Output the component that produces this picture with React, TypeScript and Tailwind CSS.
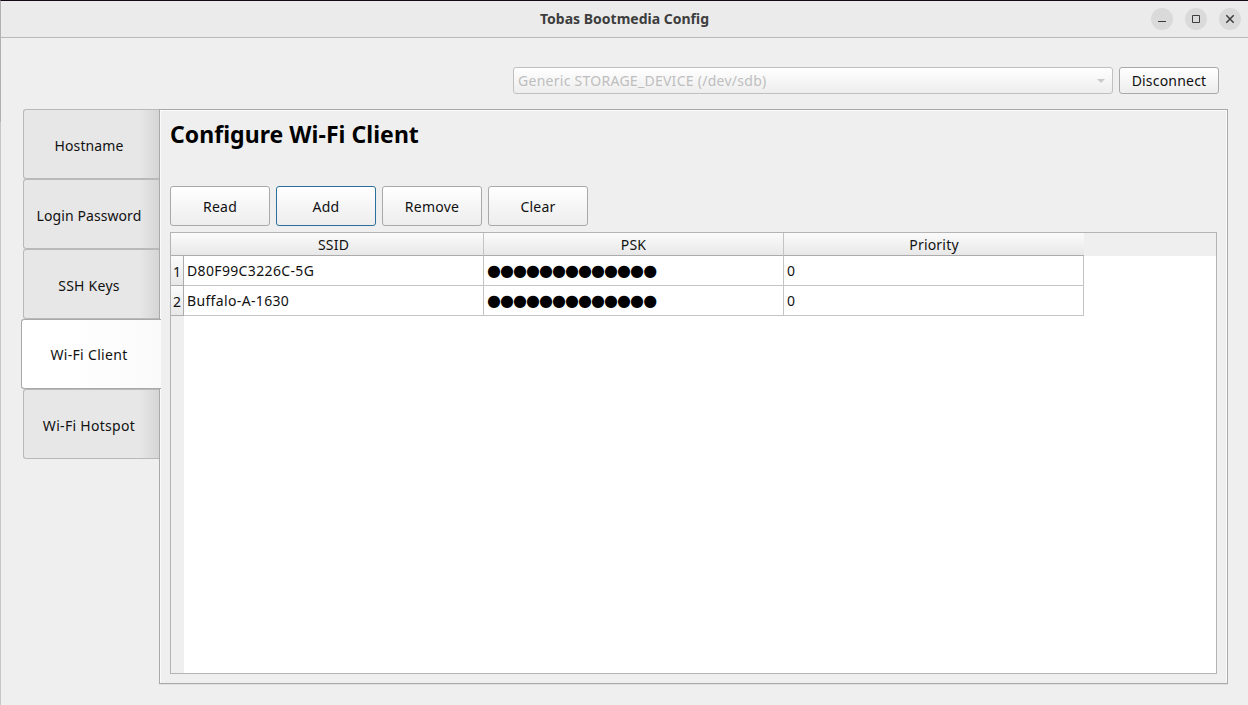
import type { ReactNode } from "react";

const SANS = "font-['Noto_Sans','Open_Sans',sans-serif]";

const tabs = [
  { label: "Hostname", spacing: "tracking-[0.12px]" },
  { label: "Login Password", spacing: "tracking-[0.08px]" },
  { label: "SSH Keys", spacing: "tracking-[0.25px]" },
  { label: "Wi-Fi Client", spacing: "tracking-[0.32px]" },
  { label: "Wi-Fi Hotspot", spacing: "tracking-[0.3px]" },
];

const actions = ["Read", "Add", "Remove", "Clear"];

const networks = [
  { ssid: "D80F99C3226C-5G", length: 13, priority: 0 },
  { ssid: "Buffalo-A-1630", length: 13, priority: 0 },
];

function WindowButton({ children }: { children: ReactNode }) {
  return (
    <button className="flex h-[22px] w-[22px] items-center justify-center rounded-full bg-[#dadada]">
      <svg width="22" height="22" viewBox="0 0 22 22" fill="none" stroke="#3d3d3d">
        {children}
      </svg>
    </button>
  );
}

function TitleBar() {
  return (
    <header className="grid h-[38px] shrink-0 grid-cols-[1fr_auto_1fr] border-t border-b border-l border-t-[#140612] border-b-[#b9b9b9] border-l-[#b0b0b0] bg-[#ebebeb]">
      <div />
      <h1 className="pt-px text-[14px] leading-[33px] font-bold text-[#3d3d3d]">Tobas Bootmedia Config</h1>
      <div className="flex items-start justify-end gap-3 pt-[7px] pr-[7px]">
        <WindowButton>
          <path d="M7 13.5h8" />
        </WindowButton>
        <WindowButton>
          <path d="M7.5 7.5h7v7h-7z" />
        </WindowButton>
        <WindowButton>
          <path d="M7.3 7.3l7.4 7.4M14.7 7.3l-7.4 7.4" strokeWidth="1.5" />
        </WindowButton>
      </div>
    </header>
  );
}

function Tab({ label, spacing, active }: { label: string; spacing: string; active: boolean }) {
  return active ? (
    <button
      className={`z-10 -mr-0.5 h-[70px] rounded-l-[3px] border border-r-0 border-[#a9a9a9] bg-linear-to-r from-white from-30% to-[#fafafa] pt-px pr-[5px] ${spacing}`}
    >
      {label}
    </button>
  ) : (
    <button
      className={`ml-0.5 h-[70px] rounded-l-[3px] border border-r-0 border-[#b9b9b9] bg-linear-to-r from-[#e7e7e7] from-86% to-[#d5d5d5] pt-[3px] pr-[5px] ${spacing}`}
    >
      {label}
    </button>
  );
}

function HeaderCell({ children, className }: { children: ReactNode; className: string }) {
  return (
    <div
      className={`h-[23px] border-b border-b-[#acacac] bg-linear-to-b from-[#fbfbfb] to-[#e8e8e8] text-center leading-[23px] ${className}`}
    >
      {children}
    </div>
  );
}

function NetworkTable() {
  return (
    <div className="flex h-[442px] w-[1047px] flex-col border border-[#b4b4b4] bg-white">
      <div className="flex h-[23px] shrink-0 bg-[#efefef] tracking-[0.2px]">
        <HeaderCell className="w-[313px] border-r border-r-[#c4c4c4] pl-[13px]">SSID</HeaderCell>
        <HeaderCell className="w-[300px] border-r border-r-[#c4c4c4]">PSK</HeaderCell>
        <HeaderCell className="w-[300px]">Priority</HeaderCell>
      </div>
      <div className="flex flex-1">
        <div className="w-[13px] bg-[#efefef]">
          {networks.map((n, i) => (
            <div
              key={n.ssid}
              className="h-[30px] border-r border-b border-[#acacac] bg-linear-to-b from-[#fbfbfb] to-[#e8e8e8] text-center leading-[31px]"
            >
              {i + 1}
            </div>
          ))}
        </div>
        <div>
          {networks.map((n) => (
            <div key={n.ssid} className="flex h-[30px] border-b border-[#c4c4c4] leading-[29px]">
              <div className="w-[300px] border-r border-[#c4c4c4] pl-[3px] tracking-[0.35px]">{n.ssid}</div>
              <div className="w-[300px] overflow-hidden border-r border-[#c4c4c4] pl-[3px] font-['DejaVu_Sans',sans-serif] text-[16px] leading-[30px] tracking-[-0.95px] text-black">
                {"●".repeat(n.length)}
              </div>
              <div className="w-[300px] border-r border-[#c4c4c4] pl-[3px]">{n.priority}</div>
            </div>
          ))}
        </div>
      </div>
    </div>
  );
}

export default function App() {
  return (
    <div className={`flex h-[705px] w-[1248px] flex-col overflow-hidden bg-[#efefef] text-[14px] text-[#111111] ${SANS}`}>
      <TitleBar />
      <div className="flex flex-1">
        <div className="w-px bg-linear-to-b from-[#b0b0b0] from-[84px] to-[#c6c6c6] to-[84px]" />
        <main className="flex-1 pt-[29px] pr-5 pl-5">
          <div className="flex justify-end gap-1.5 pr-[9px]">
            <div className="flex h-[27px] w-[600px] items-center justify-between rounded-[3px] border border-[#c0c0c0] bg-linear-to-b from-white to-[#ededed] pr-[7px] pl-1 text-[#bebebe]">
              <span className="tracking-[0.27px]">Generic STORAGE_DEVICE (/dev/sdb)</span>
              <svg width="8" height="4" viewBox="0 0 8 4" fill="#cacaca">
                <path d="M0 0h8L4 4z" />
              </svg>
            </div>
            <button className="h-[27px] w-[100px] rounded-[3px] border border-[#a9a9a9] bg-linear-to-b from-white to-[#ededed] tracking-[0.2px]">
              Disconnect
            </button>
          </div>
          <div className="mt-[15px] flex">
            <nav className="flex w-[138px] flex-col">
              {tabs.map((tab) => (
                <Tab key={tab.label} {...tab} active={tab.label === "Wi-Fi Client"} />
              ))}
            </nav>
            <section className="h-[575px] w-[1069px] border border-[#a9a9a9] pl-2.5 shadow-[inset_1px_1px_#fbfbfb,inset_-1px_0_#fbfbfb,0_1px_#e0e0e0]">
              <h2 className="h-[76px] text-[23px] leading-[48px] font-bold tracking-[0.04px] text-black">
                Configure Wi-Fi Client
              </h2>
              <div className="mb-1.5 flex gap-1.5 tracking-[0.25px]">
                {actions.map((action) => (
                  <button
                    key={action}
                    className={`h-[40px] w-[100px] rounded-[3px] border bg-linear-to-b from-white to-[#ededed] ${action === "Add" ? "border-[#2b6f9c]" : "border-[#a9a9a9]"}`}
                  >
                    {action}
                  </button>
                ))}
              </div>
              <NetworkTable />
            </section>
          </div>
        </main>
      </div>
    </div>
  );
}
